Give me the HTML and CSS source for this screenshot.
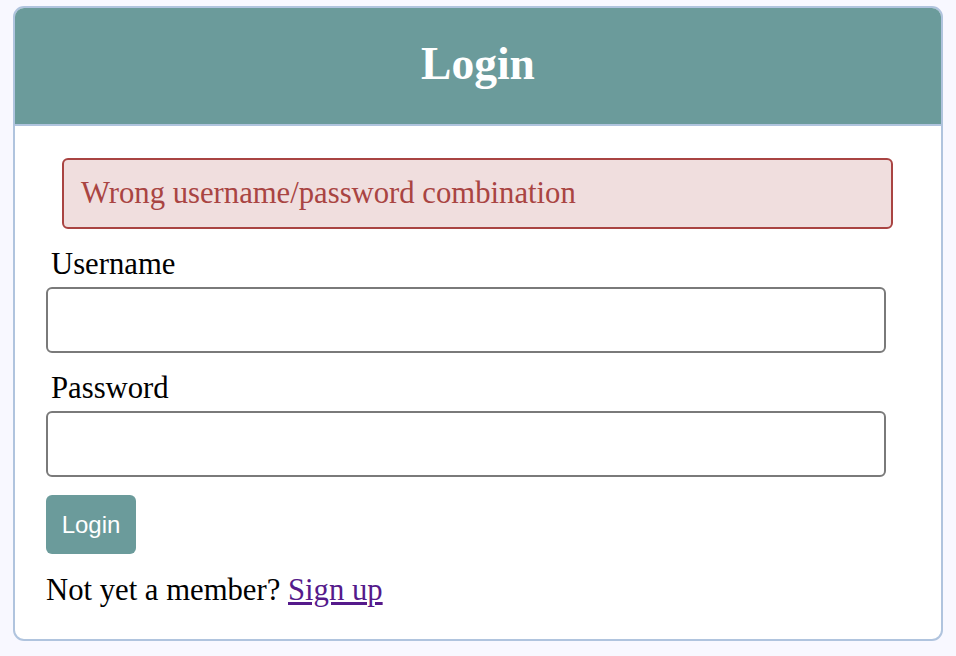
FILE: index.html
```html
<!DOCTYPE html>
<html>
<head>
<meta charset="utf-8">
<link rel="stylesheet" href="styles.css">
<title>Login</title>
</head>
<body>
<div class="card">
  <div class="header"><h2 class="title">Login</h2></div>
  <form class="form">
    <div class="error"><p class="error-text">Wrong username/password combination</p></div>
    <div class="group">
      <label class="label">Username</label>
      <input class="input" type="text" name="username">
    </div>
    <div class="group">
      <label class="label">Password</label>
      <input class="input" type="password" name="password">
    </div>
    <div class="group">
      <button class="btn" type="button">Login</button>
    </div>
    <p class="member">Not yet a member? <a class="link" href="#">Sign up</a></p>
  </form>
</div>
</body>
</html>
```

FILE: styles.css
```css
* { box-sizing: border-box; }
html, body {
  margin: 0;
  padding: 0;
  background: #f8f8ff;
  font-family: "Liberation Serif", "Times New Roman", serif;
  font-size: 30.7px;
  color: #000;
}
body { padding-top: 6px; }
.card {
  width: 930px;
  margin-left: 13px;
  background: #fff;
  border: 2px solid #b0c4de;
  border-radius: 11px;
  overflow: hidden;
}
.header {
  background: #6b9b9b;
  border-bottom: 2px solid #b0c4de;
  padding: 30px 0 34px;
  text-align: center;
}
.title {
  margin: 0;
  color: #fff;
  font-size: 45.5px;
  font-weight: bold;
  line-height: 52px;
}
.form {
  padding: 32px 0 31px 31px;
}
.error {
  width: 831px;
  height: 71px;
  margin-left: 16px;
  background: #f0dede;
  border: 2px solid #a94442;
  border-radius: 6px;
  color: #a94442;
  padding: 16px 17px;
}
.error-text {
  margin: 0;
  line-height: 35px;
}
.group {
  display: flex;
  flex-direction: column;
  align-items: flex-start;
}
.label {
  display: block;
  margin: 18px 0 5px 5px;
  line-height: 35px;
}
.input {
  width: 840px;
  height: 66px;
  border: 2px solid #7a7a7a;
  border-radius: 6px;
  font-size: 30px;
  padding: 0 10px;
  background: #fff;
}
.btn {
  margin-top: 18px;
  width: 90px;
  height: 59px;
  border: none;
  border-radius: 6px;
  background: #6b9b9b;
  color: #fff;
  font-family: "Liberation Sans", Arial, sans-serif;
  font-size: 24px;
  padding: 0;
}
.member {
  margin: 19px 0 0;
  line-height: 35px;
}
.link { color: #551a8b; }
```
